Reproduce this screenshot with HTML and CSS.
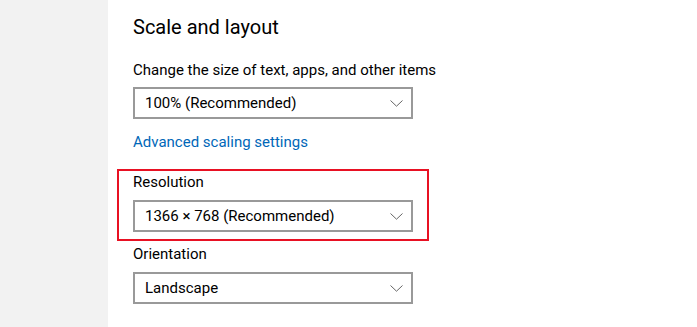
FILE: index.html
```html
<!DOCTYPE html>
<html lang="en">
<head>
<meta charset="utf-8">
<title>Scale and layout</title>
<link rel="stylesheet" href="styles.css">
</head>
<body>
<div class="page">
  <aside class="sidebar"></aside>
  <main class="content">
    <h2 class="heading">Scale and layout</h2>
    <div class="label label-first">Change the size of text, apps, and other items</div>
    <div class="dropdown">
      <span class="value">100% (Recommended)</span>
      <svg class="chevron" width="13" height="7" viewBox="0 0 13 7"><polyline points="0.5,0.5 6.5,6.2 12.5,0.5" fill="none" stroke="#666" stroke-width="1"/></svg>
    </div>
    <a class="link" href="#">Advanced scaling settings</a>
    <div class="highlight">
      <div class="label label-inbox">Resolution</div>
      <div class="dropdown dropdown-gap">
        <span class="value">1366 × 768 (Recommended)</span>
        <svg class="chevron" width="13" height="7" viewBox="0 0 13 7"><polyline points="0.5,0.5 6.5,6.2 12.5,0.5" fill="none" stroke="#666" stroke-width="1"/></svg>
      </div>
    </div>
    <div class="label label-after">Orientation</div>
    <div class="dropdown dropdown-gap">
      <span class="value">Landscape</span>
      <svg class="chevron" width="13" height="7" viewBox="0 0 13 7"><polyline points="0.5,0.5 6.5,6.2 12.5,0.5" fill="none" stroke="#666" stroke-width="1"/></svg>
    </div>
  </main>
</div>
</body>
</html>
```
FILE: styles.css
```css
html, body {
  margin: 0;
  padding: 0;
  background: #ffffff;
}
body {
  font-family: Roboto, "Open Sans", sans-serif;
  color: #000;
  width: 697px;
  height: 327px;
  overflow: hidden;
}
.page {
  display: flex;
  height: 327px;
}
.sidebar {
  width: 108px;
  flex: none;
  background: #f2f2f2;
}
.content {
  padding-left: 25px;
  padding-top: 13px;
  display: flex;
  flex-direction: column;
  align-items: flex-start;
}
.heading {
  margin: 0;
  font-size: 20px;
  font-weight: 400;
  line-height: 28px;
  height: 28px;
}
.label {
  font-size: 15px;
  line-height: 20px;
  height: 20px;
}
.label-first { margin-top: 19px; }
.label-inbox { margin-top: 0; }
.label-after { margin-top: 3px; }
.dropdown {
  box-sizing: border-box;
  width: 280px;
  height: 32px;
  margin-top: 7px;
  border: 2px solid #999;
  display: flex;
  align-items: center;
  justify-content: space-between;
  padding: 0 8px 0 10px;
  font-size: 15px;
}
.dropdown-gap { margin-top: 8px; }
.chevron { display: block; }
.link {
  margin-top: 13px;
  font-size: 15px;
  line-height: 20px;
  height: 20px;
  color: #0067b8;
  text-decoration: none;
}
.highlight {
  margin-top: 17px;
  margin-left: -16px;
  border: 2px solid #e81123;
  padding: 1px 14px 7px 14px;
}
```
